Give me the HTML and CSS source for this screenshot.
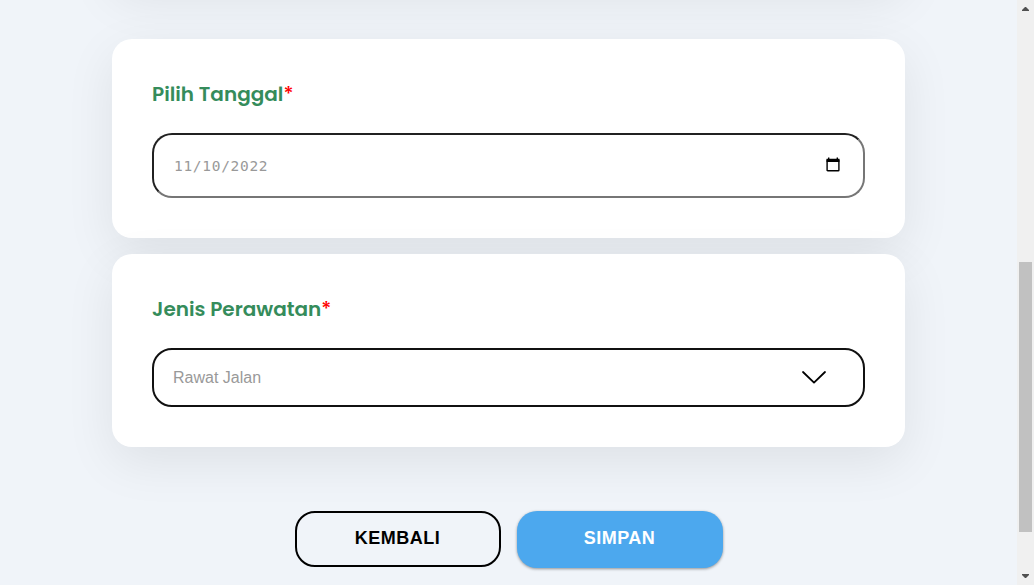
FILE: index.html
```html
<!DOCTYPE html>
<html lang="id">
<head>
<meta charset="utf-8">
<title>Pilih Tanggal</title>
<link rel="stylesheet" href="styles.css">
</head>
<body>
<main class="page">
  <section class="card card-previous"></section>
  <section class="card card-date">
    <h2 class="label">Pilih Tanggal<span class="required">*</span></h2>
    <div class="field date-field">
      <span class="date-value">11/10/2022</span>
      <svg class="calendar" viewBox="0 0 14 15"><rect x="1.1" y="2.6" width="11.8" height="11.2" rx=".6" fill="none" stroke="#000" stroke-width="1.4"/><path d="M.6 1.8h12.8v3.2H.6zM2 .6h1.4V2H2zM10.6.6H12V2h-1.4z"/></svg>
    </div>
  </section>
  <section class="card card-care">
    <h2 class="label">Jenis Perawatan<span class="required">*</span></h2>
    <div class="field select-field">
      <span class="select-value">Rawat Jalan</span>
      <svg class="chevron" viewBox="0 0 24 13"><path d="M1 1l11 10.6L23 1" fill="none" stroke="#000" stroke-width="1.8" stroke-linecap="round" stroke-linejoin="round"/></svg>
    </div>
  </section>
  <div class="actions">
    <button class="button back">KEMBALI</button>
    <button class="button save">SIMPAN</button>
  </div>
</main>
<aside class="scrollbar">
  <svg class="arrow" viewBox="0 0 7 4"><path d="M0 4V3l3-3h1l3 3v1z"/></svg>
  <div class="thumb"></div>
  <svg class="arrow" viewBox="0 0 7 4"><path d="M0 0v1l3 3h1l3-3V0z"/></svg>
</aside>
</body>
</html>
```
FILE: styles.css
```css
* { box-sizing: border-box; }
body {
  margin: 0;
  height: 585px;
  display: flex;
  overflow: hidden;
  background: #f0f4f9;
  font-family: "Liberation Sans", Arial, sans-serif;
}
.page {
  width: 1017px;
  height: 585px;
  padding: 0 112px;
  overflow: hidden;
}
.card {
  border-radius: 20px;
  background: #fff;
  padding: 40px;
  box-shadow: 0 15px 50px rgba(0, 0, 0, .08);
}
.card-previous { height: 200px; margin: -216px 0 55px; }
.card-date { height: 199px; margin-bottom: 16px; }
.card-care { height: 193px; }
.label {
  margin: 0;
  height: 54px;
  line-height: 30px;
  font-family: Poppins, Inter, sans-serif;
  font-size: 20px;
  font-weight: 600;
  color: #358c5b;
  white-space: nowrap;
}
.required { color: #f00; font-weight: 500; }
.field {
  display: flex;
  align-items: center;
  justify-content: space-between;
  border-radius: 20px;
  color: #999;
  background: #fff;
}
.date-field {
  height: 65px;
  border: 2px solid;
  border-color: #212121 #767676 #767676 #212121;
  padding: 0 23px 0 20px;
  font: 14.5px "DejaVu Sans Mono", monospace;
}
.date-value { letter-spacing: .7px; }
.calendar { width: 14px; height: 15px; margin-bottom: 2px; }
.select-field {
  height: 59px;
  border: 2px solid #111;
  padding: 0 37px 0 19px;
  font-size: 16px;
}
.chevron { width: 24px; height: 13px; }
.actions {
  display: flex;
  align-items: flex-start;
  justify-content: center;
  gap: 16px;
  margin-top: 64px;
}
.button {
  width: 206px;
  border-radius: 20px;
  padding: 0;
  font: bold 18px/20px "Liberation Sans", Arial, sans-serif;
  letter-spacing: .5px;
}
.back { height: 56px; border: 2px solid #000; background: transparent; color: #000; padding-bottom: 2px; }
.save { height: 57px; border: 0; background: #4ca8ee; color: #fff; padding-bottom: 3px; box-shadow: 0 1px 3px rgba(0, 0, 0, .4); }
.scrollbar {
  width: 17px;
  height: 585px;
  background: #f0f0f0;
  display: flex;
  flex-direction: column;
  align-items: center;
  justify-content: space-between;
  padding: 7px 0;
}
.arrow { width: 7px; height: 4px; fill: #505050; }
.thumb { width: 13px; height: 270px; margin-top: 208px; background: #c1c1c1; }
```
